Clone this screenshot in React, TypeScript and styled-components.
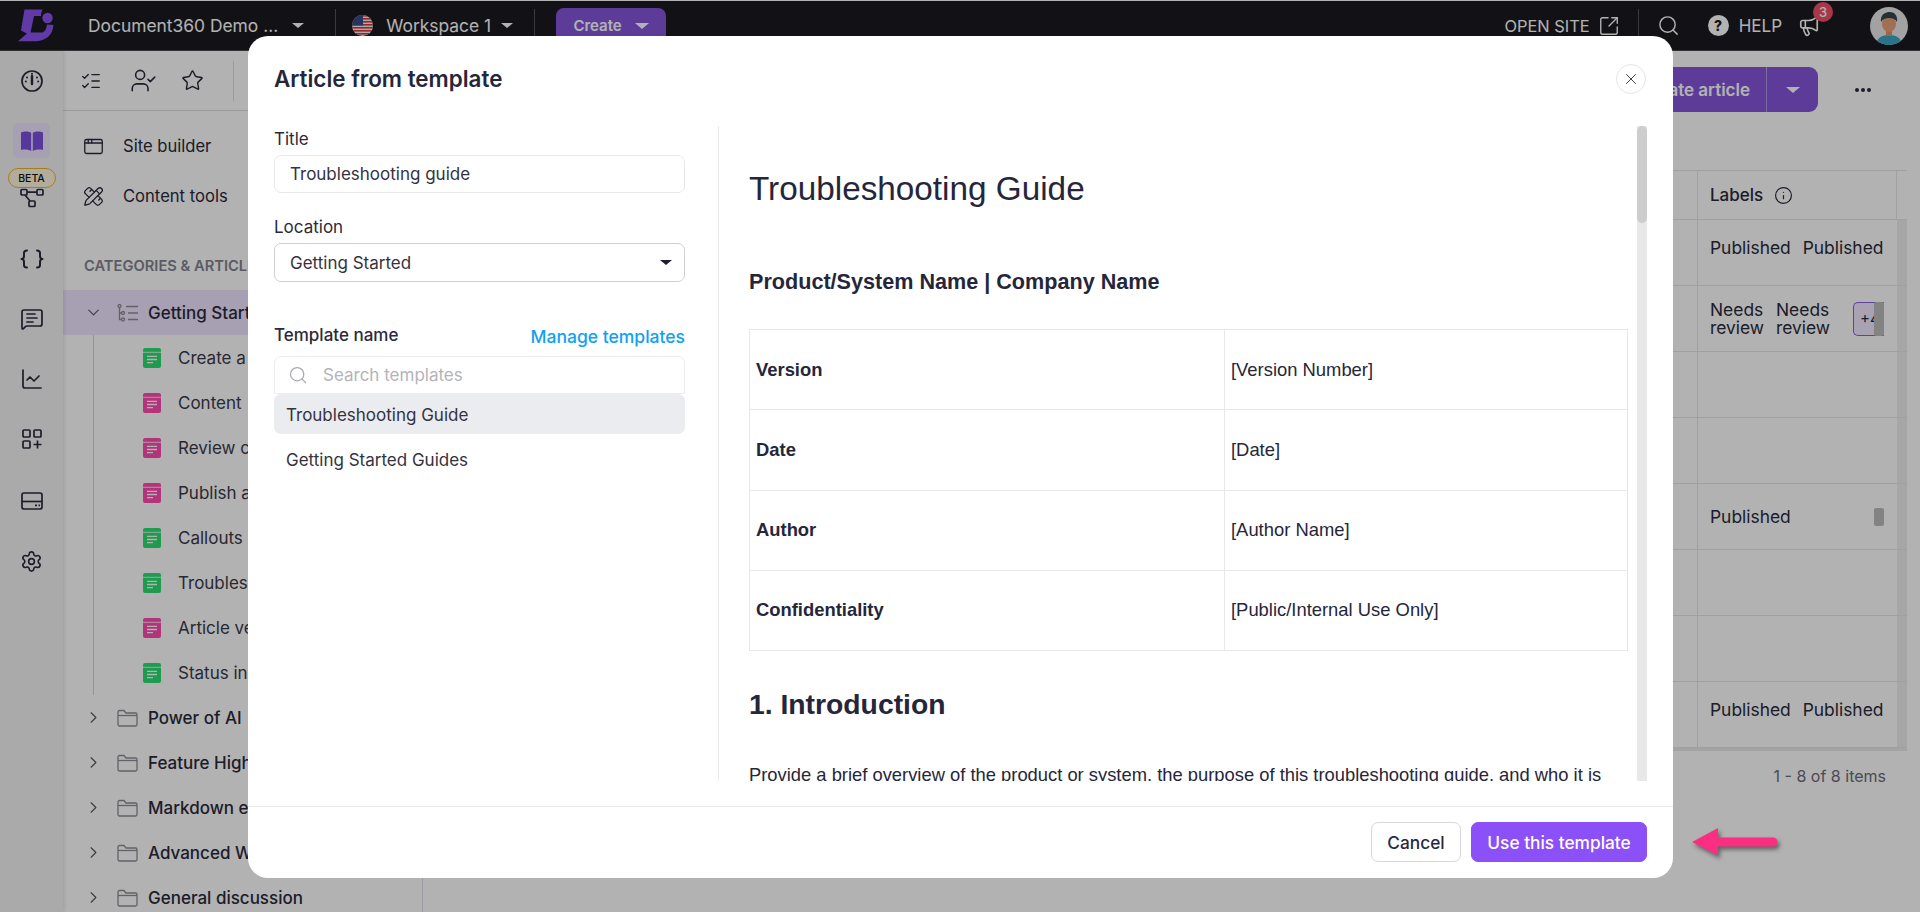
import React, { FC } from "react";
import styled, { createGlobalStyle } from "styled-components";
import {
  AppWindow,
  ChartLine,
  ChevronDown,
  ChevronRight,
  Info,
  ListChecks,
  Megaphone,
  MessageSquareText,
  PencilRuler,
  Search,
  Settings,
  SquareArrowOutUpRight,
  Star,
  UserCheck,
  X,
} from "lucide-react";

const GlobalStyle = createGlobalStyle`
  html, body {
    margin: 0;
    height: 100%;
    overflow: hidden;
    background: #fff;
  }
  body {
    font-family: Inter, "Liberation Sans", sans-serif;
    color: #2a2a3c;
  }
  * { box-sizing: border-box; }
`;

const Page = styled.div`
  position: relative;
  width: 1920px;
  height: 912px;
  overflow: hidden;
  display: flex;
  flex-direction: column;
  background: #fff;
`;

/* top bar */
const TopBar = styled.header`
  flex: none;
  height: 51px;
  border-top: 1px solid #fff;
  border-bottom: 1px solid #4a4a4e;
  background: #1b1b20;
  color: #fff;
  display: flex;
  align-items: center;
  padding: 0 12px 0 18px;
  font-size: 17.4px;
`;

const LogoBox = styled.svg`
  width: 36px;
  height: 33px;
  flex: none;
`;

const BarText = styled.span<{ $left?: number; $size?: number }>`
  margin-left: ${(p) => p.$left ?? 0}px;
  font-size: ${(p) => p.$size ?? 17.4}px;
  font-weight: 400;
  white-space: nowrap;
`;

const Caret = styled.span<{ $left?: number; $color?: string; $size?: number }>`
  flex: none;
  width: 0;
  height: 0;
  margin-left: ${(p) => p.$left ?? 0}px;
  border-left: ${(p) => p.$size ?? 6}px solid transparent;
  border-right: ${(p) => p.$size ?? 6}px solid transparent;
  border-top: ${(p) => (p.$size ?? 6) - 1}px solid ${(p) => p.$color ?? "#fff"};
`;

const BarDivider = styled.span<{ $left: number }>`
  flex: none;
  width: 1px;
  height: 34px;
  margin-left: ${(p) => p.$left}px;
  background: #55555a;
`;

const FlagBox = styled.svg<{ $left: number }>`
  flex: none;
  width: 21px;
  height: 21px;
  margin-left: ${(p) => p.$left}px;
  border-radius: 50%;
`;

const CreateButton = styled.div`
  flex: none;
  margin-left: 21px;
  width: 110px;
  height: 36px;
  border-radius: 8px;
  background: #8657dc;
  display: flex;
  align-items: center;
  justify-content: center;
  gap: 13px;
  font-size: 15px;
  font-weight: 600;
`;

const BarRight = styled.div`
  margin-left: auto;
  display: flex;
  align-items: center;
`;

const BarIcon = styled.span<{ $left: number }>`
  margin-left: ${(p) => p.$left}px;
  display: flex;
`;

const HelpDot = styled.span`
  margin-left: 28px;
  width: 21px;
  height: 21px;
  border-radius: 50%;
  background: #fff;
  color: #1b1b20;
  font-size: 14px;
  font-weight: 800;
  display: flex;
  align-items: center;
  justify-content: center;
`;

const MegaphoneWrap = styled.span`
  position: relative;
  margin-left: 16px;
  display: flex;
`;

const Badge = styled.span`
  position: absolute;
  top: -13px;
  right: -13px;
  width: 20px;
  height: 20px;
  border-radius: 50%;
  background: #f0516a;
  color: #fff;
  font-size: 13px;
  font-weight: 500;
  display: flex;
  align-items: center;
  justify-content: center;
`;

const AvatarBox = styled.svg`
  margin-left: 50px;
  flex: none;
  width: 38px;
  height: 38px;
  border-radius: 50%;
`;

/* workspace below the bar */
const Workspace = styled.div`
  flex: 1;
  min-height: 0;
  display: flex;
`;

const Rail = styled.nav`
  flex: none;
  width: 63px;
  background: #f4f4f5;
  box-shadow: 1px 0 4px rgba(0, 0, 0, 0.12);
  z-index: 1;
  display: flex;
  flex-direction: column;
  align-items: center;
  color: #2a2a3c;
`;

const RailItem = styled.div<{ $height?: number; $top?: number }>`
  flex: none;
  width: 100%;
  height: ${(p) => p.$height ?? 60}px;
  margin-top: ${(p) => p.$top ?? 0}px;
  display: flex;
  align-items: center;
  justify-content: center;
`;

const BookTile = styled.div`
  flex: none;
  width: 37px;
  height: 35px;
  margin-top: 12px;
  border-radius: 5px;
  background: #efe5ff;
  display: flex;
  align-items: center;
  justify-content: center;
`;

const BetaTag = styled.span`
  flex: none;
  margin-top: 10px;
  width: 48px;
  height: 20px;
  border: 1px solid #eeb42c;
  border-radius: 10px;
  background: #fff6e0;
  color: #111;
  font-size: 10.5px;
  font-weight: 500;
  display: flex;
  align-items: center;
  justify-content: center;
`;

const Panel = styled.aside`
  flex: none;
  width: 360px;
  background: #fff;
  border-right: 1px solid #dfe2f0;
  display: flex;
  flex-direction: column;
`;

const PanelTools = styled.div`
  flex: none;
  height: 60px;
  padding-left: 17px;
  display: flex;
  align-items: center;
  border-bottom: 1px solid #dcdcdc;
`;

const ToolIcon = styled.span<{ $width: number }>`
  flex: none;
  width: ${(p) => p.$width}px;
  display: flex;
`;

const ToolDivider = styled.span`
  flex: none;
  width: 1px;
  height: 40px;
  background: #dedede;
`;

const NavList = styled.div`
  padding: 10px 20px 0;
`;

const NavRow = styled.div`
  height: 50px;
  display: flex;
  align-items: center;
  gap: 19px;
  font-size: 16.6px;
`;

const PanelRule = styled.div`
  margin: 11px 19px 0 20px;
  height: 1px;
  background: #dedede;
`;

const SectionHeading = styled.div`
  margin: 25px 0 15px 21px;
  line-height: 18px;
  font-size: 14.7px;
  font-weight: 600;
  color: #83838e;
  white-space: nowrap;
`;

const FolderRow = styled.div<{ $selected?: boolean }>`
  flex: none;
  height: 45px;
  background: ${(p) => (p.$selected ? "#efe5ff" : "transparent")};
  padding-left: 21px;
  display: flex;
  align-items: center;
  font-size: 17px;
  font-weight: 500;
  white-space: nowrap;
  color: #2a2a3c;
`;

const FolderGlyph = styled.svg`
  flex: none;
  margin: 0 10px 0 14px;
  width: 21px;
  height: 18px;
`;

const ChildList = styled.div`
  margin-left: 30px;
  border-left: 1px solid #d5d5d5;
`;

const ArticleRow = styled.div`
  height: 45px;
  padding-left: 49px;
  display: flex;
  align-items: center;
  gap: 17px;
  font-size: 17px;
  white-space: nowrap;
  color: #3a3a4a;
`;

const ArticleGlyph = styled.svg`
  flex: none;
  width: 18px;
  height: 20px;
`;

const Main = styled.main`
  flex: 1;
  min-width: 0;
  display: flex;
  flex-direction: column;
  padding: 16px 13px 0 0;
`;

const MainActions = styled.div`
  flex: none;
  height: 45px;
  display: flex;
  justify-content: flex-end;
  align-items: center;
`;

const SplitButton = styled.div`
  width: 200px;
  height: 45px;
  border-radius: 9px;
  background: #8657dc;
  color: #fff;
  display: flex;
  align-items: center;
  font-size: 17px;
  font-weight: 600;
`;

const SplitLabel = styled.span`
  flex: 1;
  height: 100%;
  display: flex;
  align-items: center;
  justify-content: flex-end;
  padding-right: 16px;
  border-right: 1px solid #b89cf0;
  white-space: nowrap;
`;

const SplitCaret = styled.span`
  width: 51px;
  display: flex;
  justify-content: center;
`;

const Kebab = styled.span`
  width: 89px;
  display: flex;
  justify-content: center;
  gap: 2px;
  i {
    width: 4px;
    height: 4px;
    border-radius: 50%;
    background: #2a2a3c;
  }
`;

const ArticleTable = styled.div`
  margin-top: 58px;
  display: flex;
  flex-direction: column;
  border-top: 1px solid #e6e6e6;
`;

const TableRow = styled.div<{ $height: number }>`
  position: relative;
  height: ${(p) => p.$height}px;
  display: grid;
  grid-template-columns: 1fr 200px 10px;
  border-bottom: 1px solid #e6e6e6;
`;

const LabelCell = styled.div<{ $raised?: boolean }>`
  position: relative;
  border-left: 1px solid #e6e6e6;
  padding: 0 0 ${(p) => (p.$raised ? 9 : 0)}px 12px;
  display: flex;
  align-items: center;
  gap: 12px;
  font-size: 17.4px;
  line-height: 17.5px;
  color: #2a2a3c;
`;

const HeadLabel = styled.div`
  border-left: 1px solid #e6e6e6;
  border-right: 1px solid #e6e6e6;
  padding-left: 12px;
  display: flex;
  align-items: center;
  gap: 11px;
  font-size: 17px;
  font-weight: 500;
`;

const Track = styled.div`
  background: #eeeeee;
`;

const LabelChip = styled.span`
  width: 31px;
  flex: none;
  margin-left: 11px;
  height: 34px;
  border: 1px solid #8c5ce8;
  border-radius: 5px 0 0 5px;
  border-right: 0;
  background: #f1e9ff;
  padding-left: 6px;
  display: flex;
  align-items: center;
  overflow: hidden;
  font-size: 15px;
`;

const NeedsReview = styled.span`
  width: 54px;
`;

const CellThumb = styled.span<{ $height: number }>`
  position: absolute;
  right: 13px;
  top: 50%;
  margin-top: ${(p) => -p.$height / 2}px;
  width: 10px;
  height: ${(p) => p.$height}px;
  border-radius: 2px;
  background: #bcbcbc;
`;

const TableFoot = styled.div`
  height: 4px;
  margin-top: -1px;
  background: #eaeaea;
`;

const Pager = styled.div`
  margin-top: 15px;
  padding-right: 21px;
  text-align: right;
  font-size: 16px;
  line-height: 20px;
  color: #6c6c78;
`;

/* dialog on top of the dimmed page */
const Overlay = styled.div`
  position: absolute;
  inset: 0;
  z-index: 5;
  background: rgba(0, 0, 0, 0.3);
`;

const Modal = styled.section`
  position: absolute;
  z-index: 6;
  left: 248px;
  top: 36px;
  width: 1425px;
  height: 842px;
  border-radius: 20px;
  background: #fff;
  display: flex;
  flex-direction: column;
  overflow: hidden;
`;

const ModalHeader = styled.div`
  flex: none;
  height: 90px;
  padding: 28px 27px 0 26px;
  display: flex;
  justify-content: space-between;
  align-items: flex-start;
`;

const ModalTitle = styled.h2`
  margin: 0;
  font-size: 22.4px;
  line-height: 30px;
  font-weight: 600;
  color: #26263a;
`;

const CloseButton = styled.button`
  width: 30px;
  height: 30px;
  padding: 0;
  border: 1px solid #e4e4e7;
  border-radius: 50%;
  background: #fff;
  color: #3a3a4a;
  display: flex;
  align-items: center;
  justify-content: center;
`;

const ModalBody = styled.div`
  flex: none;
  height: 655px;
  display: flex;
`;

const FormColumn = styled.div`
  flex: none;
  width: 471px;
  padding: 1px 33px 0 26px;
  border-right: 1px solid #ebebed;
`;

const FieldLabel = styled.div<{ $top?: number; $bold?: boolean }>`
  margin-top: ${(p) => p.$top ?? 0}px;
  line-height: 24px;
  font-size: 17px;
  font-weight: ${(p) => (p.$bold ? 500 : 400)};
  color: #2a2a3c;
`;

const FieldBox = styled.div<{ $strong?: boolean; $height?: number }>`
  height: ${(p) => p.$height ?? 38}px;
  border: 1px solid ${(p) => (p.$strong ? "#cfcfd3" : "#e8e8eb")};
  border-radius: 7px;
  padding: 0 12px 0 15px;
  margin-top: 4px;
  display: flex;
  align-items: center;
  justify-content: space-between;
  font-size: 17px;
  color: #33333f;
`;

const TemplateHead = styled.div`
  margin-top: 41px;
  height: 24px;
  display: flex;
  justify-content: space-between;
  align-items: center;
`;

const ManageLink = styled.a`
  padding-top: 4px;
  line-height: 24px;
  font-size: 17.5px;
  font-weight: 500;
  color: #0ea2f0;
`;

const SearchBox = styled.div`
  margin-top: 9px;
  height: 38px;
  border: 1px solid #ececee;
  border-radius: 7px 7px 0 0;
  padding-left: 13px;
  display: flex;
  align-items: center;
  gap: 15px;
  font-size: 17px;
  color: #b4b4b9;
`;

const TemplateItem = styled.div<{ $active?: boolean; $top?: number }>`
  margin-top: ${(p) => p.$top ?? 0}px;
  height: 40px;
  padding: 1px 0 0 12px;
  border-radius: 7px;
  background: ${(p) => (p.$active ? "#ebecef" : "transparent")};
  display: flex;
  align-items: center;
  font-size: 17px;
  color: #33333f;
`;

const PreviewPane = styled.div`
  flex: 1;
  min-width: 0;
  display: flex;
  padding-right: 26px;
`;

const PreviewScroll = styled.div`
  flex: 1;
  min-width: 0;
  overflow: hidden;
  padding: 42px 8px 0 30px;
  font-family: "Liberation Sans", Arial, sans-serif;
  color: #26263a;
`;

const DocTitle = styled.h1`
  margin: 0;
  font-size: 33.3px;
  line-height: 42px;
  font-weight: 400;
`;

const DocSubtitle = styled.h3`
  margin: 60px 0 0;
  font-size: 21.6px;
  line-height: 24px;
  font-weight: 700;
`;

const DocTable = styled.table`
  margin-top: 35px;
  width: 879px;
  border-collapse: collapse;
  table-layout: fixed;
  font-size: 18.4px;

  td, th {
    height: 80.25px;
    border: 1px solid #e8e8e8;
    padding: 0 6px;
    text-align: left;
  }
  th {
    width: 475px;
    font-weight: 700;
  }
  td {
    font-weight: 400;
  }
`;

const DocHeading = styled.h2`
  margin: 35px 0 0;
  font-size: 28.3px;
  line-height: 36px;
  font-weight: 700;
`;

const DocParagraph = styled.p`
  margin: 40px 0 0;
  font-size: 18.37px;
  line-height: 26px;
`;

const ScrollTrack = styled.div`
  flex: none;
  width: 10px;
  background: #e8e8e8;
`;

const ScrollThumb = styled.div`
  height: 97px;
  border-radius: 5px;
  background: #cdcdcd;
`;

const ModalFooter = styled.div`
  margin-top: 25px;
  flex: none;
  height: 72px;
  border-top: 1px solid #ebebed;
  padding: 15px 26px 0 0;
  display: flex;
  justify-content: flex-end;
  align-items: flex-start;
  gap: 10px;
`;

const ActionButton = styled.button<{ $primary?: boolean; $width: number }>`
  width: ${(p) => p.$width}px;
  height: 40px;
  padding: 0;
  border-radius: 7px;
  border: 1px solid ${(p) => (p.$primary ? "#8b50f8" : "#d8d8dc")};
  background: ${(p) => (p.$primary ? "#8b50f8" : "#fff")};
  color: ${(p) => (p.$primary ? "#fff" : "#2a2a3c")};
  font-family: inherit;
  font-size: 17.3px;
  font-weight: 500;
`;

const ArrowMark = styled.svg`
  position: absolute;
  z-index: 7;
  left: 1688px;
  top: 824px;
  width: 96px;
  height: 40px;
  filter: drop-shadow(2px 3px 2px rgba(0, 0, 0, 0.45));
`;

/* drawings */
const Logo: FC = () => (
  <LogoBox viewBox="18 9 36 33">
    <path
      fill="#8a55f0"
      d="M24.5 9.5H42.5Q41 12.5 41 16H34L30.5 32.5H42.5Q46.5 30.5 47 24.5L53.5 25Q52 40 36 41.2H18L27 33.5L21 30.5Z"
    />
    <circle cx="47.5" cy="18" r="5.2" fill="#8a55f0" />
  </LogoBox>
);

const UsFlag: FC<{ left: number }> = ({ left }) => (
  <FlagBox $left={left} viewBox="0 0 21 21">
    <rect width="21" height="21" fill="#f4f4f4" />
    {[0, 3, 6, 9, 12, 15, 18].map((y) => (
      <rect key={y} y={y} width="21" height="1.6" fill="#d33a3a" />
    ))}
    <rect width="11" height="10.5" fill="#3a4a8c" />
  </FlagBox>
);

const Avatar: FC = () => (
  <AvatarBox viewBox="0 0 38 38">
    <rect width="38" height="38" fill="#e8e8e8" />
    <path d="M6 38c1-8 7-10 13-10s12 2 13 10z" fill="#3ba6c4" />
    <rect x="16" y="22" width="6" height="7" fill="#e0936a" />
    <ellipse cx="19" cy="17" rx="7" ry="8" fill="#e8a077" />
    <path d="M11 15c-1-8 5-10 9-10s8 3 7 10c-2-3-4-4-8-4s-6 1-8 4z" fill="#33474f" />
  </AvatarBox>
);

const DashIcon: FC = () => (
  <svg width="24" height="24" viewBox="0 0 24 24" fill="none" stroke="#2a2a3c" strokeWidth="1.7" strokeLinecap="round">
    <circle cx="12" cy="12" r="10" />
    <path d="M12 7v8" strokeWidth="2.4" />
    <path d="M7 8.5v.01M5.8 12.5v.01M17 8.5v.01M18.2 12.5v.01M12 4.8v.01" strokeWidth="2" />
  </svg>
);

const BookIcon: FC = () => (
  <svg width="24" height="22" viewBox="0 0 24 22" fill="#7c4fe0">
    <path d="M1 2.5C4 1 8 1 11.2 2.8V21C8 19.4 4 19.2 1 20Z" />
    <path d="M23 2.5C20 1 16 1 12.8 2.8V21C16 19.4 20 19.2 23 20Z" />
  </svg>
);

const FlowIcon: FC = () => (
  <svg width="24" height="20" viewBox="0 0 24 20" fill="none" stroke="#2a2a3c" strokeWidth="1.7">
    <rect x="1" y="1.5" width="6" height="5.5" rx="1" />
    <rect x="17" y="1.5" width="6" height="5.5" rx="1" />
    <rect x="9" y="13" width="6" height="5.5" rx="1" />
    <path d="M7 4.2h10M5 7l5 6" />
  </svg>
);

const BraceIcon: FC = () => (
  <svg width="24" height="20" viewBox="0 0 24 20" fill="none" stroke="#2a2a3c" strokeWidth="2" strokeLinecap="round" strokeLinejoin="round">
    <path d="M7 1.5c-2 0-3 1-3 2.5v3c0 1.5-1 3-2.5 3 1.5 0 2.5 1.5 2.5 3v3c0 1.5 1 2.5 3 2.5" />
    <path d="M17 1.5c2 0 3 1 3 2.5v3c0 1.5 1 3 2.5 3-1.5 0-2.5 1.5-2.5 3v3c0 1.5-1 2.5-3 2.5" />
  </svg>
);

const AppsIcon: FC = () => (
  <svg width="20" height="20" viewBox="0 0 20 20" fill="none" stroke="#2a2a3c" strokeWidth="1.7">
    <rect x="1" y="1" width="7" height="7" rx="1" />
    <rect x="12" y="1" width="7" height="7" rx="1" />
    <rect x="1" y="12" width="7" height="7" rx="1" />
    <path d="M15.5 11.5v8M11.5 15.5h8" />
  </svg>
);

const CardIcon: FC = () => (
  <svg width="22" height="18" viewBox="0 0 22 18" fill="none" stroke="#2a2a3c" strokeWidth="1.7">
    <rect x="1" y="1" width="20" height="16" rx="2" />
    <path d="M1 9.5h20" />
    <path d="M14 13.3h2M17.5 13.3h1.5" strokeWidth="1.8" />
  </svg>
);

const TreeIcon: FC = () => (
  <FolderGlyph viewBox="0 0 21 18" fill="none" stroke="#8e8c96" strokeWidth="1.3">
    <circle cx="2.5" cy="2" r="1.5" />
    <circle cx="6" cy="9" r="1.5" />
    <circle cx="6" cy="15.5" r="1.5" />
    <path d="M2.5 3.5v12h2M2.5 9h2M9 2.5h12M11 9h10M11 15.5h10" />
  </FolderGlyph>
);

const FolderIcon: FC = () => (
  <FolderGlyph viewBox="0 0 21 18" fill="none" stroke="#8e8c96" strokeWidth="1.3">
    <path d="M1 3a1.5 1.5 0 0 1 1.5-1.5h4.5l2 2.5h9.5a1.5 1.5 0 0 1 1.5 1.5v10a1.5 1.5 0 0 1-1.5 1.5h-16a1.5 1.5 0 0 1-1.5-1.5z" />
    <path d="M1 6.5h19" />
  </FolderGlyph>
);

const ArticleIcon: FC<{ color: string }> = ({ color }) => (
  <ArticleGlyph viewBox="0 0 18 20">
    <rect width="18" height="20" rx="2" fill={color} />
    <path d="M0 4.3h18" stroke="#fff" strokeWidth="0.8" />
    <path d="M4 8.3h10M4 11.5h10M4 14.7h6" stroke="#fff" strokeWidth="1.3" />
  </ArticleGlyph>
);

const ArticleGreen = "#2cdf70";
const ArticlePink = "#ff4cb0";

const articles = [
  { name: "Create a new article", color: ArticleGreen },
  { name: "Content", color: ArticlePink },
  { name: "Review content", color: ArticlePink },
  { name: "Publish an article", color: ArticlePink },
  { name: "Callouts", color: ArticleGreen },
  { name: "Troubleshooting", color: ArticleGreen },
  { name: "Article versions", color: ArticlePink },
  { name: "Status indicators", color: ArticleGreen },
];

const folders = ["Power of AI", "Feature Highlights", "Markdown editor", "Advanced WYSIWYG", "General discussion"];

const docRows = [
  ["Version", "[Version Number]"],
  ["Date", "[Date]"],
  ["Author", "[Author Name]"],
  ["Confidentiality", "[Public/Internal Use Only]"],
];

export default function App() {
  return (
    <Page>
      <GlobalStyle />
      <TopBar>
        <Logo />
        <BarText $left={34}>Document360 Demo ...</BarText>
        <Caret $left={14} />
        <BarDivider $left={31} />
        <UsFlag left={16} />
        <BarText $left={13}>Workspace 1</BarText>
        <Caret $left={10} />
        <BarDivider $left={21} />
        <CreateButton>
          Create
          <Caret $size={7} />
        </CreateButton>
        <BarRight>
          <BarText $size={16.4}>OPEN SITE</BarText>
          <BarIcon $left={8}>
            <SquareArrowOutUpRight size={22} strokeWidth={1.5} />
          </BarIcon>
          <BarDivider $left={18} />
          <BarIcon $left={18}>
            <Search size={23} strokeWidth={1.5} />
          </BarIcon>
          <HelpDot>?</HelpDot>
          <BarText $left={10} $size={17}>HELP</BarText>
          <MegaphoneWrap>
            <Megaphone size={22} strokeWidth={1.8} />
            <Badge>3</Badge>
          </MegaphoneWrap>
          <Avatar />
        </BarRight>
      </TopBar>
      <Workspace>
        <Rail>
          <RailItem $height={60}>
            <DashIcon />
          </RailItem>
          <BookTile>
            <BookIcon />
          </BookTile>
          <BetaTag>BETA</BetaTag>
          <FlowIcon />
          <RailItem $top={21}>
            <BraceIcon />
          </RailItem>
          <RailItem>
            <MessageSquareText size={24} strokeWidth={1.7} />
          </RailItem>
          <RailItem>
            <ChartLine size={24} strokeWidth={1.7} />
          </RailItem>
          <RailItem>
            <AppsIcon />
          </RailItem>
          <RailItem $top={2}>
            <CardIcon />
          </RailItem>
          <RailItem>
            <Settings size={23} strokeWidth={1.7} />
          </RailItem>
        </Rail>
        <Panel>
          <PanelTools>
            <ToolIcon $width={50}>
              <ListChecks size={22} strokeWidth={1.5} />
            </ToolIcon>
            <ToolIcon $width={51}>
              <UserCheck size={27} strokeWidth={1.4} />
            </ToolIcon>
            <ToolIcon $width={52}>
              <Star size={23} strokeWidth={1.5} />
            </ToolIcon>
            <ToolDivider />
          </PanelTools>
          <NavList>
            <NavRow>
              <AppWindow size={21} strokeWidth={1.5} />
              Site builder
            </NavRow>
            <NavRow>
              <PencilRuler size={21} strokeWidth={1.5} />
              Content tools
            </NavRow>
          </NavList>
          <PanelRule />
          <SectionHeading>CATEGORIES &amp; ARTICLES</SectionHeading>
          <FolderRow $selected>
            <ChevronDown size={19} strokeWidth={1.4} color="#55555f" />
            <TreeIcon />
            Getting Started
          </FolderRow>
          <ChildList>
            {articles.map((a) => (
              <ArticleRow key={a.name}>
                <ArticleIcon color={a.color} />
                {a.name}
              </ArticleRow>
            ))}
          </ChildList>
          {folders.map((f) => (
            <FolderRow key={f}>
              <ChevronRight size={19} strokeWidth={1.4} color="#55555f" />
              <FolderIcon />
              {f}
            </FolderRow>
          ))}
        </Panel>
        <Main>
          <MainActions>
            <SplitButton>
              <SplitLabel>Create article</SplitLabel>
              <SplitCaret>
                <Caret $size={7} />
              </SplitCaret>
            </SplitButton>
            <Kebab>
              <i />
              <i />
              <i />
            </Kebab>
          </MainActions>
          <ArticleTable>
            <TableRow $height={49}>
              <div />
              <HeadLabel>
                Labels
                <Info size={19} strokeWidth={1.5} />
              </HeadLabel>
              <div />
            </TableRow>
            <TableRow $height={66}>
              <div />
              <LabelCell $raised>
                <span>Published</span>
                <span>Published</span>
              </LabelCell>
              <Track />
            </TableRow>
            <TableRow $height={66}>
              <div />
              <LabelCell>
                <NeedsReview>Needs review</NeedsReview>
                <NeedsReview>Needs review</NeedsReview>
                <LabelChip>+4</LabelChip>
                <CellThumb $height={34} />
              </LabelCell>
              <Track />
            </TableRow>
            <TableRow $height={66}>
              <div />
              <LabelCell />
              <Track />
            </TableRow>
            <TableRow $height={66}>
              <div />
              <LabelCell />
              <Track />
            </TableRow>
            <TableRow $height={66}>
              <div />
              <LabelCell>
                <span>Published</span>
                <CellThumb $height={18} />
              </LabelCell>
              <Track />
            </TableRow>
            <TableRow $height={66}>
              <div />
              <LabelCell />
              <Track />
            </TableRow>
            <TableRow $height={66}>
              <div />
              <LabelCell />
              <Track />
            </TableRow>
            <TableRow $height={66}>
              <div />
              <LabelCell $raised>
                <span>Published</span>
                <span>Published</span>
              </LabelCell>
              <Track />
            </TableRow>
            <TableFoot />
          </ArticleTable>
          <Pager>1 - 8 of 8 items</Pager>
        </Main>
      </Workspace>
      <Overlay />
      <Modal>
        <ModalHeader>
          <ModalTitle>Article from template</ModalTitle>
          <CloseButton>
            <X size={18} strokeWidth={1.3} />
          </CloseButton>
        </ModalHeader>
        <ModalBody>
          <FormColumn>
            <FieldLabel>Title</FieldLabel>
            <FieldBox>Troubleshooting guide</FieldBox>
            <FieldLabel $top={22}>Location</FieldLabel>
            <FieldBox $strong $height={39}>
              Getting Started
              <Caret $color="#1f1f2e" />
            </FieldBox>
            <TemplateHead>
              <FieldLabel $bold>Template name</FieldLabel>
              <ManageLink>Manage templates</ManageLink>
            </TemplateHead>
            <SearchBox>
              <Search size={20} strokeWidth={1.5} color="#a8a8ad" />
              Search templates
            </SearchBox>
            <TemplateItem $active>Troubleshooting Guide</TemplateItem>
            <TemplateItem $top={5}>Getting Started Guides</TemplateItem>
          </FormColumn>
          <PreviewPane>
            <PreviewScroll>
              <DocTitle>Troubleshooting Guide</DocTitle>
              <DocSubtitle>Product/System Name | Company Name</DocSubtitle>
              <DocTable>
                <tbody>
                  {docRows.map(([k, v]) => (
                    <tr key={k}>
                      <th>{k}</th>
                      <td>{v}</td>
                    </tr>
                  ))}
                </tbody>
              </DocTable>
              <DocHeading>1. Introduction</DocHeading>
              <DocParagraph>
                Provide a brief overview of the product or system, the purpose of this troubleshooting guide, and who it is intended for.
              </DocParagraph>
            </PreviewScroll>
            <ScrollTrack>
              <ScrollThumb />
            </ScrollTrack>
          </PreviewPane>
        </ModalBody>
        <ModalFooter>
          <ActionButton $width={90}>Cancel</ActionButton>
          <ActionButton $primary $width={176}>
            Use this template
          </ActionButton>
        </ModalFooter>
      </Modal>
      <ArrowMark viewBox="0 0 96 40">
        <path d="M4 18L30 4V13.5H85A4.5 4.5 0 0 1 85 22.5H30V31.5Z" fill="#fa2f82" />
      </ArrowMark>
    </Page>
  );
}
